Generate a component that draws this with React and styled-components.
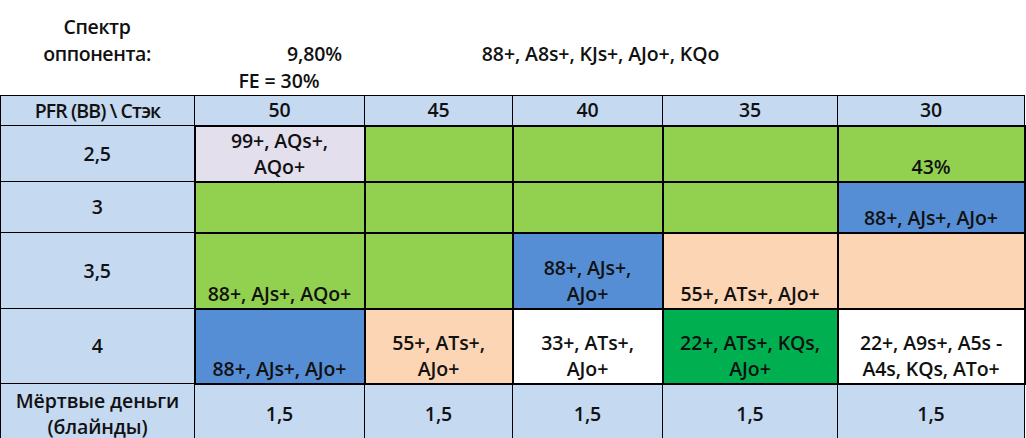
import styled, { createGlobalStyle } from "styled-components";

const GlobalStyle = createGlobalStyle`
  html, body {
    margin: 0;
    padding: 0;
    background: #ffffff;
  }
  body {
    font-family: "Open Sans", "Noto Sans", sans-serif;
    color: #111;
    overflow: hidden;
  }
`;

const COLS = [194, 170, 148, 150, 175, 187];

const FILL = {
  head: "#c5d9f1",
  green: "#92d050",
  blue: "#558ed5",
  peach: "#fcd5b4",
  lilac: "#e4dfec",
  dark: "#00b050",
  white: "#ffffff",
};

const Sheet = styled.div`
  width: 1024px;
  font-size: 19.5px;
  font-weight: 600;
  letter-spacing: -0.1px;
`;

const Summary = styled.div`
  display: grid;
  grid-template-columns: ${COLS.map((c) => `${c}px`).join(" ")};
  grid-template-rows: repeat(3, 27px);
  padding-top: 13px;
  line-height: 27px;
  height: 81px;
  margin-bottom: 1px;
`;

const Caption = styled.div`
  grid-column: 1;
  grid-row: 1 / span 2;
  text-align: center;
  letter-spacing: -0.4px;
`;

const Percent = styled.div`
  grid-column: 2;
  grid-row: 2;
  text-align: right;
  padding-right: 22px;
`;

const Range = styled.div`
  grid-column: 3 / span 3;
  grid-row: 2;
  text-align: center;
`;

const Fold = styled.div`
  grid-column: 2;
  grid-row: 3;
  text-align: center;
`;

const Grid = styled.table`
  border-collapse: collapse;
  table-layout: fixed;
  width: 1024px;
`;

const Row = styled.tr`
  height: ${({ $h }) => $h}px;
`;

const Head = styled.th`
  background: ${FILL.head};
  border: 1px solid #000;
  font-weight: 600;
  text-align: center;
  vertical-align: middle;
  line-height: 26px;
  padding: 0 2px;
  white-space: nowrap;
  letter-spacing: ${({ $tight }) => ($tight ? "-0.9px" : "-0.1px")};
`;

const Cell = styled.td`
  background: ${({ $fill }) => FILL[$fill]};
  border: 2px solid #000;
  text-align: center;
  vertical-align: bottom;
  line-height: 26px;
  padding: 0 2px 1px;
`;

const Blinds = styled.td`
  background: ${FILL.head};
  border: 1px solid #000;
  text-align: center;
  vertical-align: middle;
  line-height: 27px;
`;

const Nowrap = styled.span`
  white-space: nowrap;
`;

const rows = [
  {
    label: "2,5",
    h: 56,
    cells: [
      ["lilac", ["99+, AQs+,", "AQo+"]],
      ["green"],
      ["green"],
      ["green"],
      ["green", ["43%"]],
    ],
  },
  {
    label: "3",
    h: 51,
    cells: [
      ["green"],
      ["green"],
      ["green"],
      ["green"],
      ["blue", ["88+, AJs+, AJo+"]],
    ],
  },
  {
    label: "3,5",
    h: 76,
    cells: [
      ["green", ["88+, AJs+, AQo+"]],
      ["green"],
      ["blue", ["88+, AJs+,", "AJo+"]],
      ["peach", ["55+, ATs+, AJo+"]],
      ["peach"],
    ],
  },
  {
    label: "4",
    h: 75,
    cells: [
      ["blue", ["88+, AJs+, AJo+"]],
      ["peach", ["55+, ATs+,", "AJo+"]],
      ["white", ["33+, ATs+,", "AJo+"]],
      ["dark", ["22+, ATs+, KQs,", "AJo+"]],
      ["white", ["22+, A9s+, A5s -", "A4s, KQs, ATo+"]],
    ],
  },
];

const stacks = ["50", "45", "40", "35", "30"];

function Lines({ text = [] }) {
  return text.map((t, i) => (
    <span key={i}>
      {i > 0 && <br />}
      <Nowrap>{t}</Nowrap>
    </span>
  ));
}

export default function App() {
  return (
    <Sheet>
      <GlobalStyle />
      <Summary>
        <Caption>
          Спектр
          <br />
          оппонента:
        </Caption>
        <Percent>9,80%</Percent>
        <Range>88+, A8s+, KJs+, AJo+, KQo</Range>
        <Fold>FE = 30%</Fold>
      </Summary>

      <Grid>
        <colgroup>
          {COLS.map((w, i) => (
            <col key={i} style={{ width: w }} />
          ))}
        </colgroup>
        <tbody>
          <Row $h={30}>
            <Head $tight>PFR (BB) \ Стэк</Head>
            {stacks.map((s) => (
              <Head key={s}>{s}</Head>
            ))}
          </Row>
          {rows.map((r) => (
            <Row key={r.label} $h={r.h}>
              <Head>{r.label}</Head>
              {r.cells.map(([fill, text], i) => (
                <Cell key={i} $fill={fill}>
                  <Lines text={text} />
                </Cell>
              ))}
            </Row>
          ))}
          <Row $h={60}>
            <Head>
              Мёртвые деньги
              <br />
              (блайнды)
            </Head>
            {stacks.map((s) => (
              <Blinds key={s}>1,5</Blinds>
            ))}
          </Row>
        </tbody>
      </Grid>
    </Sheet>
  );
}
